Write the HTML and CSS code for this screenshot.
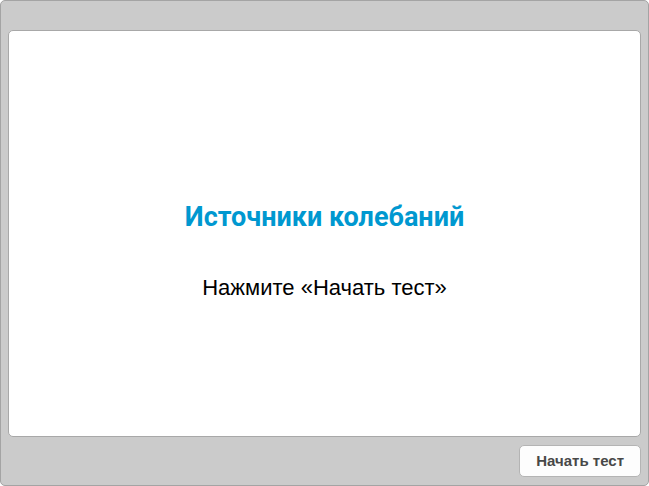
FILE: index.html
```html
<!DOCTYPE html>
<html lang="ru">
<head>
<meta charset="utf-8">
<meta name="viewport" content="width=device-width, initial-scale=1">
<title>Источники колебаний</title>
<link rel="stylesheet" href="styles.css">
</head>
<body>
<div class="player">
  <main class="slide">
    <h1 class="title">Источники колебаний</h1>
    <p class="hint">Нажмите «Начать тест»</p>
  </main>
  <footer class="controls">
    <button class="start" type="button">Начать тест</button>
  </footer>
</div>
</body>
</html>
```
FILE: styles.css
```css
* {
  box-sizing: border-box;
}

body {
  margin: 0;
  background: #fff;
  font-family: "Liberation Sans", Arial, sans-serif;
}

.player {
  display: flex;
  flex-direction: column;
  min-height: 100vh;
  padding: 29px 7px 8px;
  background: #cbcbcb;
  border: 1px solid #a4a4a4;
  border-radius: 5px;
}

.slide {
  flex: 1;
  display: flex;
  flex-direction: column;
  align-items: center;
  justify-content: center;
  gap: 40px;
  padding-top: 32px;
  background: #fff;
  border: 1px solid #a8a8a8;
  border-radius: 5px;
  text-align: center;
}

.title {
  margin: 0;
  color: #0098d0;
  font-family: Roboto, sans-serif;
  font-size: 27px;
  line-height: 36px;
  font-weight: 700;
}

.hint {
  margin: 0;
  color: #000;
  font-size: 22px;
  line-height: 26px;
}

.controls {
  display: flex;
  justify-content: flex-end;
  padding-top: 8px;
}

.start {
  height: 32px;
  padding: 0 16px;
  background: #fdfdfd;
  border: 1px solid #b4b4b4;
  border-radius: 5px;
  color: #484848;
  font: bold 15px/20px "Liberation Sans", Arial, sans-serif;
  cursor: pointer;
}
```
